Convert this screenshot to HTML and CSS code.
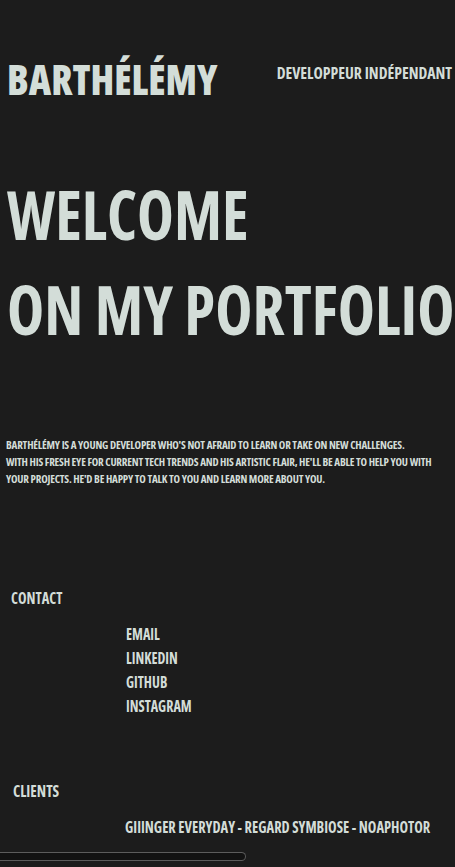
FILE: index.html
```html
<!DOCTYPE html>
<html lang="fr">
<head>
<meta charset="utf-8">
<title>Barthélémy</title>
<link rel="stylesheet" href="styles.css">
</head>
<body>
<div class="page">
  <header class="top">
    <h1 class="logo"><span class="sq sq-logo">BARTHÉLÉMY</span></h1>
    <p class="role"><span class="sq sq-role">DEVELOPPEUR INDÉPENDANT</span></p>
  </header>
  <section class="hero">
    <h2 class="hero-line"><span class="sq sq-h1">WELCOME</span></h2>
    <h2 class="hero-line"><span class="sq sq-h2">ON MY PORTFOLIO</span></h2>
  </section>
  <section class="about">
    <p>BARTHÉLÉMY IS A YOUNG DEVELOPER WHO'S NOT AFRAID TO LEARN OR TAKE ON NEW CHALLENGES.<br>WITH HIS FRESH EYE FOR CURRENT TECH TRENDS AND HIS ARTISTIC FLAIR, HE'LL BE ABLE TO HELP YOU WITH YOUR PROJECTS. HE'D BE HAPPY TO TALK TO YOU AND LEARN MORE ABOUT YOU.</p>
  </section>
  <section class="contact">
    <h3 class="label"><span class="sq sq-label">CONTACT</span></h3>
    <ul class="links">
      <li><span class="sq sq-link">EMAIL</span></li>
      <li><span class="sq sq-link">LINKEDIN</span></li>
      <li><span class="sq sq-link">GITHUB</span></li>
      <li><span class="sq sq-link">INSTAGRAM</span></li>
    </ul>
  </section>
  <section class="clients">
    <h3 class="label"><span class="sq sq-clients">CLIENTS</span></h3>
    <p class="client-list"><span class="sq sq-list">GIIINGER EVERYDAY - REGARD SYMBIOSE - NOAPHOTOR</span></p>
  </section>
</div>
<div class="hscroll"></div>
</body>
</html>
```
FILE: styles.css
```css
html, body {
  margin: 0;
  padding: 0;
  background: #1c1c1c;
}
body {
  color: #d3ddd8;
  font-family: "Open Sans", "Roboto", sans-serif;
  font-stretch: 75%;
  font-weight: 700;
  overflow: hidden;
}
.page {
  width: 455px;
  white-space: nowrap;
  overflow: hidden;
}
h1, h2, h3, p, ul {
  margin: 0;
  padding: 0;
}
.sq {
  display: inline-block;
  transform-origin: left center;
}
.top {
  display: flex;
  justify-content: space-between;
  align-items: flex-start;
  padding: 51px 3px 0 7px;
  height: 138px;
  box-sizing: border-box;
}
.logo {
  font-size: 42px;
  line-height: 56px;
  font-weight: 800;
}
.sq-logo { transform: scaleX(0.93); }
.role {
  font-size: 16px;
  line-height: 24px;
  font-weight: 700;
  margin-top: 10px;
}
.sq-role {
  transform-origin: right center;
  transform: scaleX(0.985);
}
.hero {
  padding: 28px 0 0 7px;
  height: 298px;
  box-sizing: border-box;
}
.hero-line {
  font-size: 68px;
  line-height: 95px;
  font-weight: 700;
}
.sq-h1 { transform: scaleX(0.915); }
.sq-h2 { transform: scaleX(0.925); }
.about {
  padding: 0 0 0 6px;
  height: 150px;
  box-sizing: border-box;
}
.about p {
  font-size: 11px;
  line-height: 17px;
  white-space: normal;
  width: 440px;
  letter-spacing: -0.2px;
}
.contact {
  padding: 0 0 0 11px;
  height: 193px;
  box-sizing: border-box;
}
.label {
  font-size: 16px;
  line-height: 24px;
  font-weight: 700;
}
.sq-label { transform: scaleX(0.9); }
.sq-clients { transform: scaleX(0.94); }
.links {
  list-style: none;
  padding-left: 115px;
  margin-top: 12px;
}
.links li {
  font-size: 16px;
  line-height: 24px;
}
.sq-link { transform: scaleX(0.88); }
.sq-list { transform: scaleX(0.905); }
.clients {
  padding: 0 0 0 13px;
}
.client-list {
  font-size: 16px;
  line-height: 24px;
  padding-left: 112px;
  margin-top: 12px;
}
.hscroll {
  position: fixed;
  left: 0;
  bottom: 6px;
  width: 245px;
  height: 7px;
  background: #121212;
  border: 1px solid #5c5c5c;
  border-left: none;
  border-radius: 0 5px 5px 0;
}
```
